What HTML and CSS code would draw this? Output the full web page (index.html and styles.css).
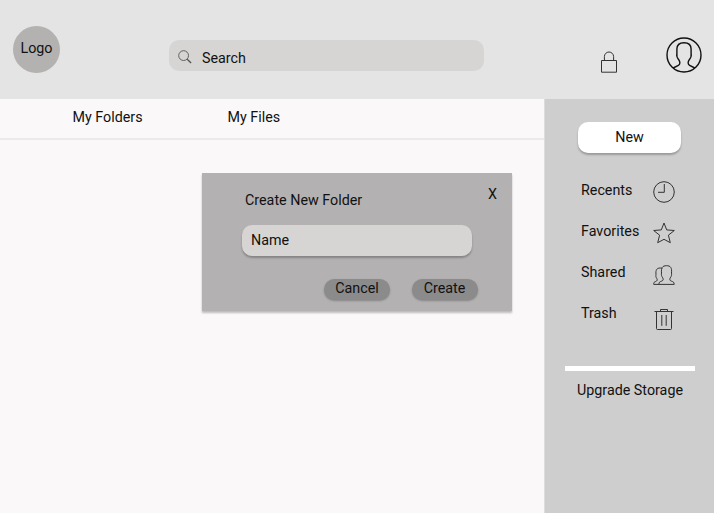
FILE: index.html
```html
<!DOCTYPE html>
<html lang="en">
<head>
<meta charset="utf-8">
<title>My Folders</title>
<link rel="stylesheet" href="styles.css">
</head>
<body>
<header class="topbar">
  <div class="logo">Logo</div>
  <div class="search">
    <svg class="search-icon" width="14" height="14" viewBox="0 0 14 14"><circle cx="5.600" cy="5.600" r="4.900"/><path d="M9 9l1 1"/><path class="handle" d="M9.700 9.700l3.400 3.300"/></svg>
    <span>Search</span>
  </div>
  <svg class="lock" width="18" height="24" viewBox="0 0 18 24"><path d="M1.500 10.500h15v11.700h-15zM4.400 10.500V6.600a4.600 4.600 0 0 1 9.200 0v3.900"/></svg>
  <svg class="avatar" width="36" height="36" viewBox="0 0 36 36"><circle cx="18" cy="18" r="17"/><path d="M7.200 31l5.200-2.600c1.900-1 1.800-3.600.5-5.400-2-2.400-2.600-4-2-6.200V12c0-4.400 2-6.300 7.100-6.300s7.100 1.900 7.100 6.300v4.800c.6 2.200 0 3.800-2 6.200-1.300 1.800-1.400 4.400.5 5.400l5.200 2.600"/></svg>
</header>
<div class="body">
  <main class="content">
    <nav class="tabs"><span>My Folders</span><span>My Files</span></nav>
    <section class="dialog">
      <div class="dialog-head"><span class="title">Create New Folder</span><span class="close">X</span></div>
      <div class="name-field">Name</div>
      <div class="actions"><div class="btn">Cancel</div><div class="btn create">Create</div></div>
    </section>
  </main>
  <aside class="sidebar">
    <div class="new">New</div>
    <div class="item recents"><span>Recents</span><svg width="22" height="22" viewBox="0 0 22 22"><circle cx="11" cy="11" r="10.300"/><path d="M11.300 3v8.300H5"/></svg></div>
    <div class="item favorites"><span>Favorites</span><svg width="22" height="22" viewBox="0 0 22 22"><path d="M11 1l2.700 6.900 7.600.6-5.900 4.700 1.900 7.500-6.300-3.400-6.300 3.400 1.900-7.500L.7 8.500l7.600-.6z"/></svg></div>
    <div class="item shared"><span>Shared</span><svg width="22" height="22" viewBox="0 0 22 22"><path d="M5.900 20.400c.1-2.200.5-2.500 2.800-3.300 1.600-.6 1.900-1.700 1-3.300-1.300-1.800-1.500-3.100-1.200-4.700-.5-5.400.9-7.400 5-7.400s5.500 2 5 7.400c.3 1.600.1 2.900-1.200 4.700-.9 1.600-.6 2.700 1 3.300 2.300.8 2.700 1.100 2.900 3.300H.7c0-2 .5-2.400 2-2.900 1.500-.6 1.900-1.500 1.100-3-1-1.500-1.100-2.600-.8-4-.5-4.700.8-6.500 4.300-6.500.8 0 1.400.1 2 .4"/></svg></div>
    <div class="item trash"><span>Trash</span><svg width="22" height="24" viewBox="0 0 22 24"><path d="M1.500 4.500h19M3.500 4.500v17q0 1 1 1h13q1 0 1-1v-17M7.500 4.500v-2h7v2M8.800 8v10.800M13.200 8v10.800"/></svg></div>
    <div class="storage-bar"></div>
    <div class="upgrade">Upgrade Storage</div>
  </aside>
</div>
</body>
</html>
```
FILE: styles.css
```css
* { box-sizing: border-box; }
body {
  margin: 0;
  height: 513px;
  overflow: hidden;
  display: flex;
  flex-direction: column;
  font: 14.3px/16px Roboto, sans-serif;
  color: #111;
  background: #faf8f9;
}
svg { display: block; fill: none; stroke: #333; stroke-width: 1; flex: none; }
.topbar {
  height: 99px;
  flex: none;
  display: flex;
  align-items: flex-start;
  background: #e4e4e4;
}
.logo {
  width: 47px;
  height: 47px;
  margin: 26px 0 0 13px;
  padding-top: 14px;
  border-radius: 50%;
  text-align: center;
  background: #b3b2b1;
}
.search {
  width: 315px;
  height: 31px;
  margin: 40px 0 0 109px;
  padding: 5px 0 0 9px;
  border-radius: 10px;
  display: flex;
  align-items: center;
  gap: 10px;
  background: #d6d5d3;
}
.search-icon { margin-top: -3px; stroke: #555; stroke-width: .9; }
.search-icon .handle { stroke-width: 1.4; }
.lock { margin: 50px 0 0 116px; }
.avatar { margin: 37px 0 0 48px; stroke: #111; stroke-width: 1.4; }
.body { flex: 1; display: flex; }
.content { width: 544px; }
.tabs {
  height: 41px;
  padding: 10px 0 0 72.5px;
  display: flex;
  gap: 85px;
  border-bottom: 2px solid #ebe9ea;
}
.dialog {
  width: 310px;
  height: 138px;
  margin: 33px 0 0 202px;
  padding: 12px 15px 0 40px;
  background: #b3b1b2;
  box-shadow: 0 2px 2px rgba(0, 0, 0, .25);
}
.dialog-head { display: flex; justify-content: space-between; height: 40px; }
.title { margin: 7px 0 0 3px; }
.close { margin-top: 1px; }
.name-field {
  width: 230px;
  height: 31px;
  padding: 7px 9px;
  border-radius: 10px;
  background: #d6d5d3;
  box-shadow: 0 2px 2px rgba(0, 0, 0, .25);
}
.actions { display: flex; gap: 21.5px; margin: 23px 0 0 82px; }
.btn {
  width: 66px;
  height: 21px;
  border-radius: 11px;
  line-height: 19px;
  text-align: center;
  background: #8b8b8b;
  box-shadow: 0 1px 2px rgba(0, 0, 0, .25);
}
.sidebar { flex: 1; padding-left: 20px; border-left: 1px solid #dddcdd; background: #cecece; }
.new {
  width: 103px;
  height: 31px;
  margin: 23px 0 0 13px;
  padding-top: 7px;
  border-radius: 10px;
  text-align: center;
  background: #fff;
  box-shadow: 0 2px 2px rgba(0, 0, 0, .25);
}
.item { display: flex; justify-content: space-between; align-items: flex-start; width: 94px; margin-left: 16px; height: 41px; }
.item svg { margin-top: -1px; }
.recents { margin-top: 29px; }
.shared svg { margin-top: 0; }
.trash svg { margin-top: 2px; }
.storage-bar { width: 130px; height: 5px; margin-top: 20px; background: #fff; }
.upgrade { margin: 11px 0 0 12px; }
```
